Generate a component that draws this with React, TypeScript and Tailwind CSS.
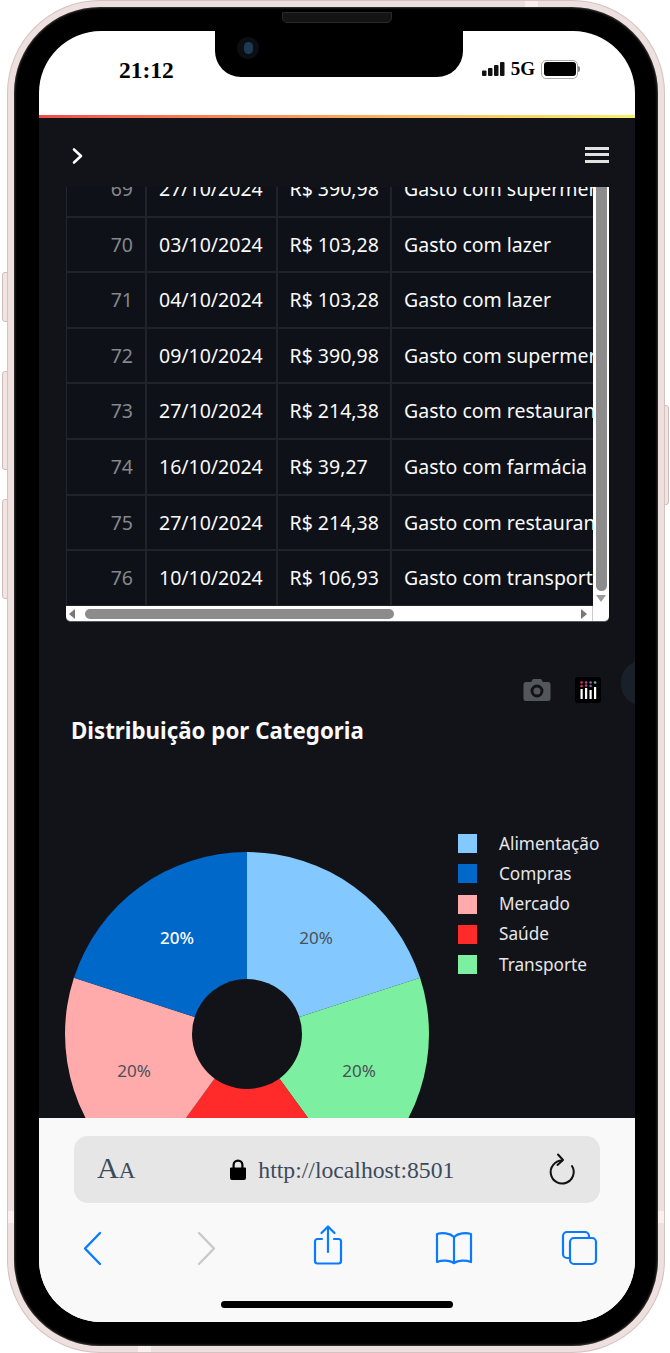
import React from 'react';

const ROWS = [
  { id: 69, date: '27/10/2024', value: 'R$ 390,98', desc: 'Gasto com supermercado' },
  { id: 70, date: '03/10/2024', value: 'R$ 103,28', desc: 'Gasto com lazer' },
  { id: 71, date: '04/10/2024', value: 'R$ 103,28', desc: 'Gasto com lazer' },
  { id: 72, date: '09/10/2024', value: 'R$ 390,98', desc: 'Gasto com supermercado' },
  { id: 73, date: '27/10/2024', value: 'R$ 214,38', desc: 'Gasto com restaurante' },
  { id: 74, date: '16/10/2024', value: 'R$ 39,27', desc: 'Gasto com farmácia' },
  { id: 75, date: '27/10/2024', value: 'R$ 214,38', desc: 'Gasto com restaurante' },
  { id: 76, date: '10/10/2024', value: 'R$ 106,93', desc: 'Gasto com transporte' },
];

const LEGEND = [
  { name: 'Alimentação', swatch: 'bg-[#83c9ff]' },
  { name: 'Compras', swatch: 'bg-[#0068c9]' },
  { name: 'Mercado', swatch: 'bg-[#ffabab]' },
  { name: 'Saúde', swatch: 'bg-[#ff2b2b]' },
  { name: 'Transporte', swatch: 'bg-[#7defa1]' },
];

const PieChart = () => (
  <svg width="364" height="364" viewBox="0 0 364 364" className="mt-[19px] ml-[26px] shrink-0">
    <path d="M182 182 L182 0 A182 182 0 0 1 355.1 125.8 Z" fill="#83c9ff" />
    <path d="M182 182 L355.1 125.8 A182 182 0 0 1 289 329.2 Z" fill="#7defa1" />
    <path d="M182 182 L289 329.2 A182 182 0 0 1 75 329.2 Z" fill="#ff2b2b" />
    <path d="M182 182 L75 329.2 A182 182 0 0 1 8.9 125.8 Z" fill="#ffabab" />
    <path d="M182 182 L8.9 125.8 A182 182 0 0 1 182 0 Z" fill="#0068c9" />
    <circle cx="182" cy="182" r="55" fill="#111318" />
    <g fontSize="17" textAnchor="middle" fontFamily="'Noto Sans', sans-serif">
      <text x="251" y="92" fill="#4a5058">20%</text>
      <text x="112" y="92" fill="#ffffff" fontWeight="500">20%</text>
      <text x="69" y="225" fill="#4a5058">20%</text>
      <text x="294" y="225" fill="#4a5058">20%</text>
    </g>
  </svg>
);

const ToolbarIcons = () => (
  <div className="flex items-center pl-[37px] pt-[25px]">
    <svg width="32" height="40" viewBox="0 0 32 40" fill="none" stroke="#0a7aff" strokeWidth="2.4" strokeLinecap="round" strokeLinejoin="round">
      <path d="M24 5 L9 20.5 L24 36" />
    </svg>
    <svg width="32" height="40" viewBox="0 0 32 40" fill="none" stroke="#c9c9c9" strokeWidth="2.4" strokeLinecap="round" strokeLinejoin="round" className="ml-[83px]">
      <path d="M8 5 L23 20.5 L8 36" />
    </svg>
    <svg width="32" height="42" viewBox="0 0 32 42" fill="none" stroke="#0a7aff" strokeWidth="2.2" strokeLinecap="round" strokeLinejoin="round" className="ml-[89px] -mt-[6px]">
      <path d="M10 15 H5.500 A2.500 2.500 0 0 0 3 17.500 V37 A2.500 2.500 0 0 0 5.500 39.500 H26.500 A2.500 2.500 0 0 0 29 37 V17.500 A2.500 2.500 0 0 0 26.500 15 H22" />
      <path d="M16 28 V2.500 M9.500 9 L16 2.500 L22.500 9" />
    </svg>
    <svg width="40" height="36" viewBox="0 0 40 36" fill="none" stroke="#0a7aff" strokeWidth="2.2" strokeLinejoin="round" className="ml-[90px]">
      <path d="M20 7 C16 3 8 2.500 3 4 V32 C8 30 16 30 20 33 C24 30 32 30 37 32 V4 C32 2.500 24 3 20 7 Z" />
      <path d="M20 7 V33" />
    </svg>
    <svg width="38" height="38" viewBox="0 0 38 38" fill="none" stroke="#0a7aff" strokeWidth="2.2" className="ml-[87px]">
      <rect x="9" y="9" width="26" height="26" rx="4" />
      <path d="M9 29 H6 A4 4 0 0 1 2 25 V7 A4 4 0 0 1 6 3 H24 A4 4 0 0 1 28 7 V9" />
    </svg>
  </div>
);

const App = () => {
  return (
    <div className="w-[670px] h-[1353px] bg-white relative overflow-hidden font-['Noto_Sans',sans-serif]">
      {/* side buttons */}
      <div className="absolute left-[2px] top-[272px] w-[7px] h-[50px] rounded-l-[3px] border border-[#cdbcbb] bg-[#f1e5e3]" />
      <div className="absolute left-[2px] top-[371px] w-[7px] h-[99px] rounded-l-[3px] border border-[#cdbcbb] bg-[#f1e5e3]" />
      <div className="absolute left-[2px] top-[499px] w-[7px] h-[100px] rounded-l-[3px] border border-[#cdbcbb] bg-[#f1e5e3]" />
      <div className="absolute left-[664px] top-[405px] w-[5px] h-[100px] rounded-r-[3px] border border-[#cdbcbb] bg-[#f1e5e3]" />

      <div className="relative ml-2 mt-px w-[656px] h-[1351px] rounded-[92px] border-[6px] border-[#eee0de] bg-black pl-[25px] pt-[24px] ring-1 ring-[#d3c3c1] shadow-[inset_0_0_3px_#777]">
        <div className="relative w-[596px] h-[1291px] rounded-[62px] overflow-hidden bg-white flex flex-col">
          {/* notch over the status bar */}
          <div className="absolute left-[176px] top-0 w-[248px] h-[46px] bg-black rounded-b-[26px]">
            <div className="absolute left-[22px] top-[6px] w-[22px] h-[22px] rounded-full bg-[#0b0f14] flex items-center justify-center">
              <div className="w-[9px] h-[12px] rounded-full bg-[#1d3a55]" />
            </div>
          </div>

          {/* status bar */}
          <div className="h-[84px] shrink-0 flex items-start justify-between pt-[26px] pl-[80px] pr-[55px]">
            <span className="font-['Liberation_Serif',serif] font-bold text-[23.500px] leading-[26px] text-black">21:12</span>
            <div className="flex items-center gap-[6px]">
              <svg width="23" height="14" viewBox="0 0 23 14" fill="#111">
                <rect x="0" y="8.500" width="4.500" height="5.500" rx="1" />
                <rect x="6" y="6" width="4.500" height="8" rx="1" />
                <rect x="12" y="3" width="4.500" height="11" rx="1" />
                <rect x="18" y="0" width="4.500" height="14" rx="1" />
              </svg>
              <span className="font-['Liberation_Serif',serif] font-bold text-[19px] leading-[24px] text-black">5G</span>
              <div className="flex items-center">
                <div className="w-[37px] h-[19px] rounded-[5px] border-[1.500px] border-[#aaa] p-[1.500px]">
                  <div className="w-full h-full rounded-[3px] bg-black" />
                </div>
                <div className="w-[2px] h-[6px] rounded-r bg-[#888]" />
              </div>
            </div>
          </div>

          <div className="h-[3px] shrink-0 bg-linear-to-r from-[#f04b4b] to-[#f5f06a]" />

          {/* app */}
          <div className="relative flex-1 min-h-0 bg-[#111318] flex flex-col overflow-hidden">
            <div className="h-[69px] shrink-0 flex items-center justify-between pl-[32px] pr-[26px] pt-[6px]">
              <svg width="14" height="18" viewBox="0 0 14 18" fill="none" stroke="#fafafa" strokeWidth="2.6" strokeLinecap="round" strokeLinejoin="round">
                <path d="M3 2.500 L10 9 L3 15.500" />
              </svg>
              <div className="w-[24px] flex flex-col gap-[3.500px] -mt-[2px]">
                <div className="h-[3px] bg-[#e2e2e2]" />
                <div className="h-[3px] bg-[#e2e2e2]" />
                <div className="h-[3px] bg-[#e2e2e2]" />
              </div>
            </div>

            {/* dataframe */}
            <div className="ml-[27px] w-[543px] shrink-0 h-[435px] overflow-hidden rounded-b-[5px] bg-white flex flex-col border-b border-[#55585e]">
              <div className="flex flex-1 min-h-0">
                <div className="w-[527px] overflow-hidden bg-[#0e1117] border-l border-[#24262c]">
                  <div className="-mt-[25px]">
                    {ROWS.map((row) => (
                      <div key={row.id} className="grid grid-cols-[80px_131px_114px_1fr] h-[55.6px] border-b-2 border-[#212329] text-[19.500px] leading-[53px]">
                        <div className="border-r-2 border-[#212329] text-right pr-[12px] text-[#85878c]">{row.id}</div>
                        <div className="border-r-2 border-[#212329] pl-[12px] text-[#fafafa] whitespace-nowrap">{row.date}</div>
                        <div className="border-r-2 border-[#212329] pl-[11.500px] text-[#fafafa] whitespace-nowrap">{row.value}</div>
                        <div className="pl-[12px] text-[#fafafa] whitespace-nowrap overflow-hidden">{row.desc}</div>
                      </div>
                    ))}
                  </div>
                </div>
                <div className="w-[16px] flex flex-col items-center">
                  <div className="w-[11px] flex-1 rounded-b-full bg-[#8c8c8c]" />
                  <svg width="10" height="9" viewBox="0 0 10 9" className="my-[3px]"><path d="M0 1 H10 L5 8 Z" fill="#9a9a9a" /></svg>
                </div>
              </div>
              <div className="h-[15px] shrink-0 flex items-center relative">
                <svg width="6" height="10" viewBox="0 0 6 10" className="ml-[3px]"><path d="M6 0 V10 L0 5 Z" fill="#777" /></svg>
                <div className="ml-[10px] w-[309px] h-[10px] rounded-full bg-[#8c8c8c]" />
                <svg width="6" height="10" viewBox="0 0 6 10" className="ml-[187px]"><path d="M0 0 V10 L6 5 Z" fill="#777" /></svg>
                <div className="ml-[5px] h-full border-l border-[#ccc]" />
              </div>
            </div>

            {/* plotly modebar */}
            <div className="flex justify-end items-center gap-[24px] pr-[34px] mt-[55px] shrink-0 h-[26px]">
              <svg width="28" height="24" viewBox="0 0 28 24" fill="#53565b">
                <path fillRule="evenodd" d="M3 4 H8 L10 1 H18 L20 4 H25 A2.500 2.500 0 0 1 27.500 6.500 V20.500 A2.500 2.500 0 0 1 25 23 H3 A2.500 2.500 0 0 1 .5 20.500 V6.500 A2.500 2.500 0 0 1 3 4 Z M14 6.500 A6.500 6.500 0 1 0 14 19.500 A6.500 6.500 0 1 0 14 6.500 Z M14 9.500 A3.500 3.500 0 1 1 14 16.500 A3.500 3.500 0 1 1 14 9.500 Z" />
              </svg>
              <svg width="26" height="26" viewBox="0 0 26 26">
                <rect width="26" height="26" rx="3" fill="#000" />
                <rect x="5.500" y="12" width="2.200" height="10" fill="#fff" />
                <rect x="10" y="11" width="2.200" height="11" fill="#fff" />
                <rect x="14.500" y="13" width="2.200" height="9" fill="#fff" />
                <rect x="19" y="10" width="2.200" height="12" fill="#fff" />
                <circle cx="6.600" cy="5.500" r="1.300" fill="#e6296f" />
                <circle cx="6.600" cy="9" r="1.300" fill="#e6296f" />
                <circle cx="11.100" cy="5.500" r="1.300" fill="#a8487f" />
                <circle cx="11.100" cy="8.500" r="1.300" fill="#a8487f" />
                <circle cx="15.600" cy="5.500" r="1.300" fill="#7d6a9c" />
                <circle cx="15.600" cy="9" r="1.300" fill="#7d6a9c" />
                <circle cx="20.100" cy="5.500" r="1.300" fill="#4fb5c9" />
              </svg>
            </div>

            <h2 className="ml-[32px] mt-[13px] text-[22.300px] leading-[30px] font-bold text-[#fafafa] shrink-0">Distribuição por Categoria</h2>

            {/* chart */}
            <div className="flex mt-[87px] shrink-0">
              <PieChart />
              <div className="ml-[29px] mt-[1px] flex flex-col gap-[11.100px]">
                {LEGEND.map((item) => (
                  <div key={item.name} className="flex items-center h-[19.200px] gap-[22px]">
                    <div className={`w-[19px] h-[19px] ${item.swatch}`} />
                    <span className="text-[17.200px] leading-[20px] text-[#e6e6e8] whitespace-nowrap">{item.name}</span>
                  </div>
                ))}
              </div>
            </div>

            {/* edge of the floating button */}
            <div className="absolute right-[-30px] top-[542px] w-[44px] h-[46px] rounded-full bg-[#1a2029]" />
          </div>

          {/* browser toolbar */}
          <div className="h-[204px] shrink-0 bg-[#f9f9f9] pt-[18px]">
            <div className="mx-[35px] h-[67px] rounded-[14px] bg-[#e6e6e6] flex items-center pl-[23px] pr-[24px]">
              <span className="font-['Liberation_Serif',serif] text-[#3d4a5c] text-[30px] leading-[34px]">A<span className="text-[23px]">A</span></span>
              <div className="flex items-center ml-[95px] gap-[12px]">
                <svg width="16" height="21" viewBox="0 0 16 21" fill="#000">
                  <path d="M2.500 8.500 V6 A5.500 5.500 0 0 1 13.500 6 V8.500 H15 A1 1 0 0 1 16 9.500 V19 A2 2 0 0 1 14 21 H2 A2 2 0 0 1 0 19 V9.500 A1 1 0 0 1 1 8.500 Z M4.700 8.500 H11.300 V6 A3.300 3.300 0 0 0 4.700 6 Z" fillRule="evenodd" />
                </svg>
                <span className="font-['Liberation_Serif',serif] text-[#3d4a5c] text-[23.700px] leading-[30px] whitespace-nowrap">http://localhost:8501</span>
              </div>
              <svg width="28" height="34" viewBox="0 0 28 34" fill="none" stroke="#111" strokeWidth="2" strokeLinecap="round" strokeLinejoin="round" className="ml-auto">
                <path d="M14 7.500 A11.500 11.500 0 1 0 24 13" />
                <path d="M10 1.500 L15 7 L9.500 12" />
              </svg>
            </div>
            <ToolbarIcons />
            <div className="mt-[33px] mx-auto w-[232px] h-[7px] rounded-full bg-black" />
          </div>
        </div>

        {/* top speaker, over the bezel */}
        <div className="absolute left-[268px] top-[5px] w-[110px] h-[11px] rounded-b-[5px] bg-[#141414] border border-[#2a2a2a]" />
        {/* antenna bands */}
        <div className="absolute left-[511px] -top-[6px] w-[13px] h-[6px] bg-[#f8efee]" />
        <div className="absolute left-[124px] -bottom-[6px] w-[13px] h-[6px] bg-[#f8efee]" />
        <div className="absolute -left-[6px] top-[1204px] w-[6px] h-[12px] bg-[#f8efee]" />
        <div className="absolute -right-[6px] top-[1204px] w-[6px] h-[12px] bg-[#f8efee]" />
      </div>
    </div>
  );
};

export default App;
